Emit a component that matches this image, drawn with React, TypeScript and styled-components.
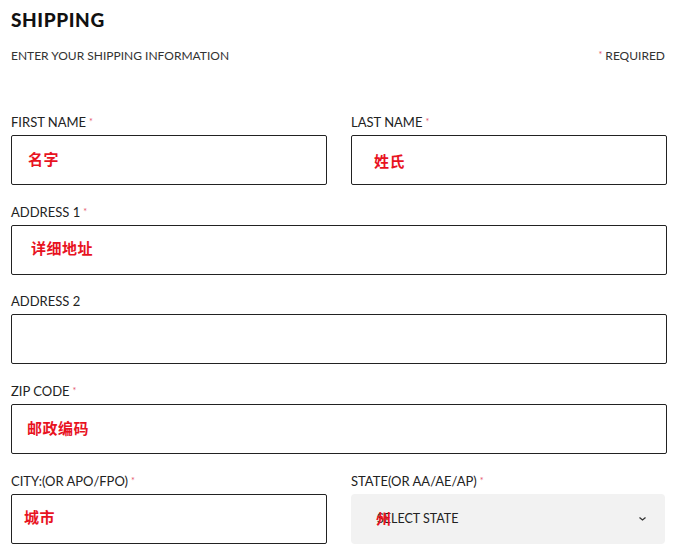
import React from "react";
import styled, { createGlobalStyle } from "styled-components";

const GlobalStyle = createGlobalStyle`
  html, body {
    margin: 0;
    padding: 0;
    background: #fff;
  }
  body {
    font-family: Lato, "Noto Sans", "Noto Sans CJK SC", sans-serif;
    color: #222;
  }
`;

const Page = styled.div`
  width: 678px;
  padding: 0 11px;
  box-sizing: border-box;
`;

const Title = styled.h2`
  margin: 0;
  padding-top: 9px;
  font-size: 19px;
  font-weight: 900;
  letter-spacing: 0.6px;
  line-height: 22px;
  color: #111;
`;

const SubRow = styled.div`
  display: flex;
  justify-content: space-between;
  align-items: center;
  margin-top: 17px;
  font-size: 12px;
  line-height: 14px;
  color: #333;
  padding-right: 2px;
`;

const Star = styled.span`
  color: #e5556c;
  font-size: 9px;
  vertical-align: top;
  margin-left: 3px;
`;

const LeadStar = styled(Star)`
  margin-left: 0;
  margin-right: 3px;
  vertical-align: 2px;
`;

const Form = styled.div`
  display: grid;
  grid-template-columns: 1fr 1fr;
  column-gap: 24px;
  row-gap: 19.7px;
  margin-top: 52px;
`;

const Field = styled.div<{ $full?: boolean }>`
  grid-column: ${({ $full }) => ($full ? "1 / span 2" : "auto")};
  display: flex;
  flex-direction: column;
`;

const Label = styled.div`
  font-size: 13px;
  line-height: 14px;
  color: #222;
  margin-bottom: 6px;
  white-space: nowrap;
`;

const Box = styled.div<{ $dx: number; $dy: number }>`
  height: 50px;
  box-sizing: border-box;
  border: 1px solid #222;
  border-radius: 2px;
  display: flex;
  align-items: center;
  padding-left: ${({ $dx }) => $dx}px;
  padding-top: ${({ $dy }) => $dy}px;
  padding-bottom: 4px;
`;

const Value = styled.span`
  color: #e8131f;
  font-family: "Noto Sans CJK SC", sans-serif;
  font-weight: 700;
  font-size: 15px;
  letter-spacing: 0.5px;
`;

const Select = styled.div`
  position: relative;
  height: 50px;
  box-sizing: border-box;
  background: #f2f2f2;
  border-radius: 4px;
  margin-right: 2px;
  display: flex;
  align-items: center;
  padding-left: 26px;
  padding-right: 18px;
  justify-content: space-between;
`;

const SelectText = styled.span`
  font-size: 12.5px;
  color: #222;
`;

const Overlay = styled.span`
  position: absolute;
  left: 25px;
  top: 13px;
  color: #e8131f;
  font-family: "Noto Sans CJK SC", sans-serif;
  font-weight: 700;
  font-size: 15px;
`;

const Chevron = () => (
  <svg width="9" height="8" viewBox="0 0 9 8">
    <path d="M1.5 2.5 L4.5 5 L7.5 2.5" fill="none" stroke="#333" strokeWidth="1.3" />
  </svg>
);

type Item = { label: string; req: boolean; value?: string; dx: number; dy: number; full?: boolean };

const rows: Item[] = [
  { label: "FIRST NAME", req: true, value: "名字", dx: 16, dy: 0 },
  { label: "LAST NAME", req: true, value: "姓氏", dx: 22, dy: 4 },
  { label: "ADDRESS 1", req: true, value: "详细地址", dx: 19, dy: 0, full: true },
  { label: "ADDRESS 2", req: false, dx: 16, dy: 0, full: true },
  { label: "ZIP CODE", req: true, value: "邮政编码", dx: 15, dy: 0, full: true },
  { label: "CITY:(OR APO/FPO)", req: true, value: "城市", dx: 12, dy: 0 },
];

export default function App() {
  return (
    <Page>
      <GlobalStyle />
      <Title>SHIPPING</Title>
      <SubRow>
        <span>ENTER YOUR SHIPPING INFORMATION</span>
        <span>
          <LeadStar>*</LeadStar>REQUIRED
        </span>
      </SubRow>
      <Form>
        {rows.map((r) => (
          <Field key={r.label} $full={r.full}>
            <Label>
              {r.label}
              {r.req && <Star>*</Star>}
            </Label>
            <Box $dx={r.dx} $dy={r.dy}>
              {r.value && <Value>{r.value}</Value>}
            </Box>
          </Field>
        ))}
        <Field>
          <Label>
            STATE(OR AA/AE/AP)
            <Star>*</Star>
          </Label>
          <Select>
            <SelectText>SELECT STATE</SelectText>
            <Chevron />
            <Overlay>州</Overlay>
          </Select>
        </Field>
      </Form>
    </Page>
  );
}
